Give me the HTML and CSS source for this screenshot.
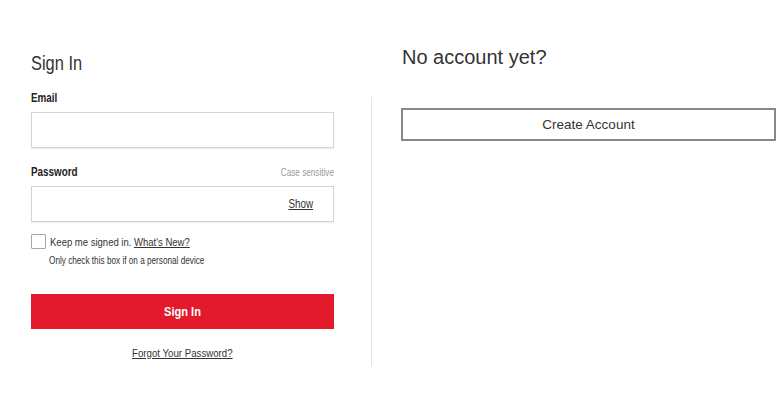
FILE: index.html
```html
<!DOCTYPE html>
<html lang="en">
<head>
<meta charset="utf-8">
<title>Sign In</title>
<link rel="stylesheet" href="styles.css">
</head>
<body>
<div class="page">
  <section class="signin">
    <h1 class="title"><span class="narrow">Sign In</span></h1>
    <label class="label email-label"><span class="narrow">Email</span></label>
    <div class="field"></div>
    <div class="label-row">
      <label class="label"><span class="narrow">Password</span></label>
      <span class="case"><span class="narrow narrow-right">Case sensitive</span></span>
    </div>
    <div class="field field-pw"><a class="show"><span class="narrow narrow-right">Show</span></a></div>
    <div class="keep-row">
      <span class="checkbox"></span>
      <span class="keep-text"><span class="narrow">Keep me signed in. <a class="link">What's New?</a></span></span>
    </div>
    <p class="hint"><span class="narrow">Only check this box if on a personal device</span></p>
    <button class="btn-primary"><span class="narrow narrow-center">Sign In</span></button>
    <div class="forgot"><a class="link"><span class="narrow narrow-center">Forgot Your Password?</span></a></div>
  </section>
  <div class="divider"></div>
  <section class="create">
    <h2 class="create-title">No account yet?</h2>
    <button class="btn-secondary">Create Account</button>
  </section>
</div>
</body>
</html>
```

FILE: styles.css
```css
* { box-sizing: border-box; }
html, body { margin: 0; padding: 0; background: #fff; }
body { font-family: "Liberation Sans", Arial, sans-serif; color: #222; }

.narrow { display: inline-block; white-space: nowrap; transform: scaleX(0.82); transform-origin: left center; }
.narrow-right { transform-origin: right center; }
.narrow-center { transform-origin: center center; }

.page { display: flex; align-items: flex-start; padding-left: 31px; }

.signin { width: 303px; padding-top: 51px; display: flex; flex-direction: column; }
.title { margin: 0; font-size: 20px; line-height: 24px; font-weight: normal; color: #333; }
.label { font-size: 12px; line-height: 14px; font-weight: bold; color: #222; }
.email-label { display: block; margin-top: 16px; }
.field { margin-top: 7px; height: 36px; border: 1px solid #d4d4d4; box-shadow: 0 1px 1px rgba(0,0,0,0.06); display: flex; align-items: center; justify-content: flex-end; padding-right: 20px; }
.label-row { margin-top: 17px; display: flex; justify-content: space-between; align-items: baseline; line-height: 14px; }
.case { font-size: 10px; color: #9a9a9a; }
.field-pw { margin-top: 6px; }
.show { font-size: 12px; color: #333; text-decoration: underline; }
.show .narrow, .link .narrow { text-decoration: underline; }

.keep-row { margin-top: 12px; display: flex; align-items: center; height: 15px; }
.checkbox { width: 15px; height: 15px; border: 1px solid #a8a8a8; border-radius: 1px; background: #fff; flex: none; }
.keep-text { margin-left: 4px; font-size: 11.6px; line-height: 15px; color: #333; }
.link { color: #333; text-decoration: underline; }
.hint { margin: 6px 0 0 18px; font-size: 10px; line-height: 12px; color: #333; }

.btn-primary { margin-top: 27px; height: 35px; border: none; background: #e21a2c; color: #fff; font-family: inherit; font-size: 13.5px; font-weight: bold; width: 100%; padding: 0; }
.forgot { margin-top: 17px; text-align: center; font-size: 11.8px; line-height: 15px; }

.divider { width: 1px; background: #e4e4e4; height: 269px; margin-top: 97px; margin-left: 37px; flex: none; }

.create { margin-left: 29px; padding-top: 45px; width: 375px; }
.create-title { margin: 0 0 0 1px; font-size: 20px; line-height: 24px; font-weight: normal; color: #333; }
.btn-secondary { display: block; margin-top: 39px; width: 375px; height: 33px; border: 2px solid #888; background: #fff; color: #333; font-family: inherit; font-size: 13.5px; padding: 0; }
```
